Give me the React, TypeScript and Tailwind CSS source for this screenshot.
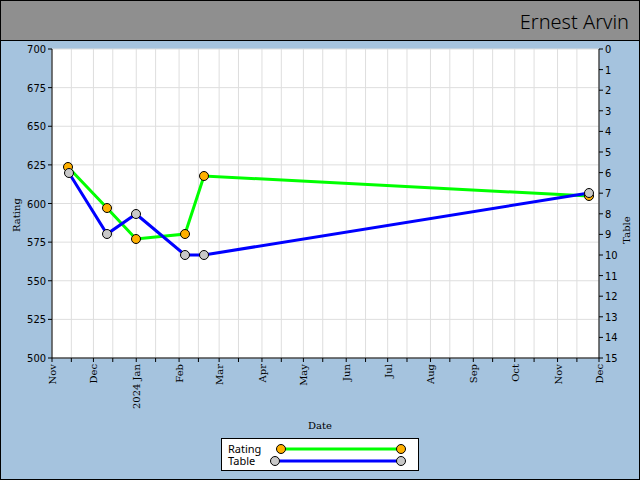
import React from 'react';

const X0 = 52;
const X1 = 599;
const Y0 = 49;
const Y1 = 358;
const DAYS = 396;
const px = (d: number) => X0 + (d / DAYS) * (X1 - X0);

const MONTHS = ['Nov', 'Dec', '2024 Jan', 'Feb', 'Mar', 'Apr', 'May', 'Jun', 'Jul', 'Aug', 'Sep', 'Oct', 'Nov', 'Dec'];
const MONTH_DAYS = [0, 30, 61, 92, 121, 152, 182, 213, 243, 274, 305, 335, 366, 396];

const rating = [[68, 167], [107, 208], [136, 239], [185, 234], [204, 176], [589, 196]];
const table = [[69, 173], [107, 234], [136, 214], [185, 255], [204, 255], [589, 193]];

const SERIF = '"DejaVu Serif", serif';
const COND = '"DejaVu Sans Condensed", sans-serif';

export default function App() {
  const ticks: number[] = [];
  MONTH_DAYS.forEach((d, i) => {
    ticks.push(px(d));
    if (i < MONTH_DAYS.length - 1) ticks.push(px(d + 14));
  });
  const ratingY = Array.from({ length: 9 }, (_, i) => Y0 + (i * (Y1 - Y0)) / 8);
  const tableY = Array.from({ length: 16 }, (_, i) => Y0 + (i * (Y1 - Y0)) / 15);

  return (
    <div className="w-[640px] h-[480px] bg-[#a5c3de] border border-black flex flex-col overflow-hidden">
      <div className="h-[40px] shrink-0 bg-[#8f8f8f] border-b border-black flex items-center justify-end pr-[10px]">
        <span className="text-[20px] font-light text-black mt-[2px] font-['DejaVu_Sans_Condensed',sans-serif]">
          Ernest Arvin
        </span>
      </div>
      <svg width={638} height={396} viewBox="1 41 638 396" className="block shrink-0">
        <rect x={X0} y={Y0} width={X1 - X0} height={Y1 - Y0} fill="#fff" />
        {ticks.map((x, i) => (
          <line key={'g' + i} x1={x} x2={x} y1={Y0} y2={Y1} stroke="#dedede" />
        ))}
        {ratingY.map((y, i) => (
          <line key={'h' + i} x1={X0} x2={X1} y1={y} y2={y} stroke="#dedede" />
        ))}
        <line x1={X0} x2={X0} y1={Y0} y2={Y1} stroke="#000" />
        <line x1={X1} x2={X1} y1={Y0} y2={Y1} stroke="#000" />
        <line x1={X0} x2={X1} y1={Y1} y2={Y1} stroke="#000" />
        {ticks.map((x, i) => (
          <line key={'t' + i} x1={x} x2={x} y1={Y1} y2={Y1 + 4} stroke="#000" />
        ))}
        {ratingY.map((y, i) => (
          <g key={'r' + i}>
            <line x1={X0 - 4} x2={X0} y1={y} y2={y} stroke="#000" />
            <text x={X0 - 6} y={y + 4} textAnchor="end" fontSize={11} fontFamily={COND}>
              {700 - i * 25}
            </text>
          </g>
        ))}
        {tableY.map((y, i) => (
          <g key={'s' + i}>
            <line x1={X1} x2={X1 + 4} y1={y} y2={y} stroke="#000" />
            <text x={X1 + 6} y={y + 4} fontSize={11} fontFamily={COND}>
              {i}
            </text>
          </g>
        ))}
        {MONTHS.map((m, i) => {
          const x = px(MONTH_DAYS[i]) + 4;
          return (
            <text key={'m' + i} x={x} y={Y1 + 6} transform={`rotate(-90 ${x} ${Y1 + 6})`} textAnchor="end" fontSize={10} fontFamily={SERIF}>
              {m}
            </text>
          );
        })}
        <text x={20} y={215} transform="rotate(-90 20 215)" textAnchor="middle" fontSize={10} fontFamily={SERIF}>Rating</text>
        <text x={630} y={230} transform="rotate(-90 630 230)" textAnchor="middle" fontSize={10} fontFamily={SERIF}>Table</text>
        <text x={320} y={429} textAnchor="middle" fontSize={10} fontFamily={SERIF}>Date</text>
        <polyline points={rating.map((p) => p.join(',')).join(' ')} fill="none" stroke="#00ff00" strokeWidth={3} />
        <polyline points={table.map((p) => p.join(',')).join(' ')} fill="none" stroke="#0000ff" strokeWidth={3} />
        {rating.map(([x, y], i) => (
          <circle key={'rc' + i} cx={x} cy={y} r={4.5} fill="#ffb000" stroke="#000" />
        ))}
        {table.map(([x, y], i) => (
          <circle key={'tc' + i} cx={x} cy={y} r={4.5} fill="#c8c8c8" stroke="#000" />
        ))}
      </svg>
      <div className="mx-auto w-[198px] h-[33px] bg-white border border-black mt-[1px] flex flex-col justify-center pl-[6px] text-[11px] leading-[12px] font-['DejaVu_Serif',serif]">
        <LegendRow label="Rating" color="#00ff00" fill="#ffb000" start={53} />
        <LegendRow label="Table" color="#0000ff" fill="#c8c8c8" start={47} />
      </div>
    </div>
  );
}

function LegendRow({ label, color, fill, start }: { label: string; color: string; fill: string; start: number }) {
  return (
    <div className="relative h-[12px]">
      <span className="absolute left-0 top-0">{label}</span>
      <svg className="absolute top-0 left-0" width={190} height={12}>
        <line x1={start} x2={173} y1={6} y2={6} stroke={color} strokeWidth={3} />
        <circle cx={start} cy={6} r={4.5} fill={fill} stroke="#000" />
        <circle cx={173} cy={6} r={4.5} fill={fill} stroke="#000" />
      </svg>
    </div>
  );
}
